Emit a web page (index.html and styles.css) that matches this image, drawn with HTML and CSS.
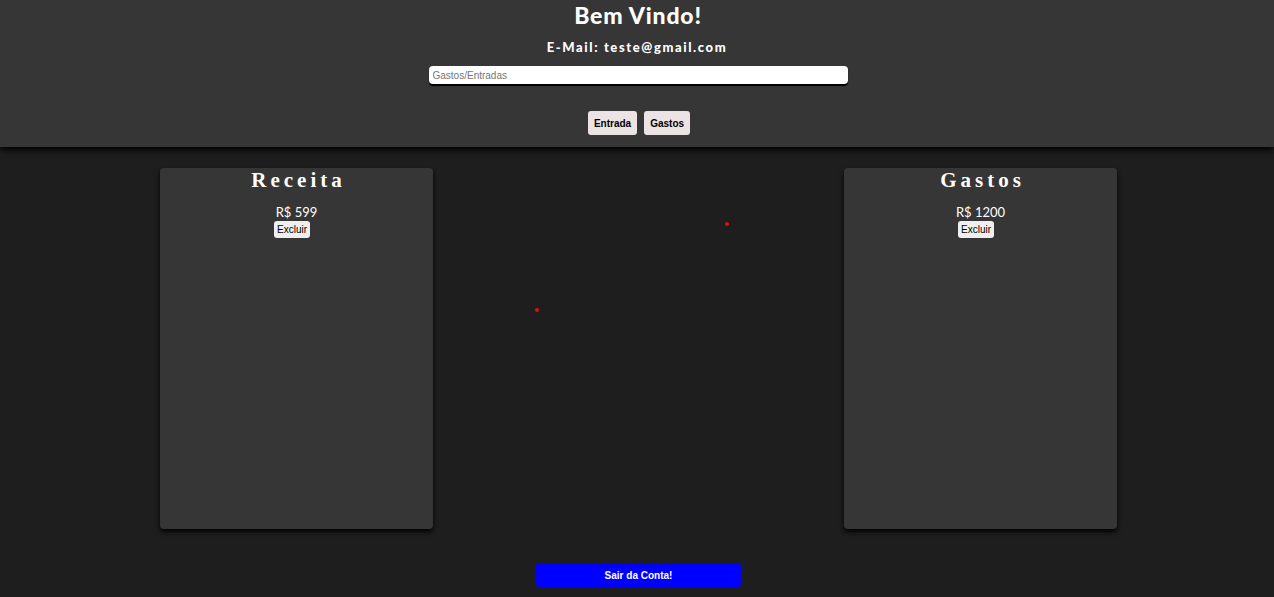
FILE: index.html
```html
<!DOCTYPE html>
<html lang="pt-BR">
<head>
<meta charset="utf-8">
<title>Bem Vindo</title>
<link rel="stylesheet" href="styles.css">
</head>
<body>
<header class="topo">
  <h1 class="titulo">Bem Vindo!</h1>
  <h3 class="email">E-Mail: teste@gmail.com</h3>
  <input class="campo" type="text" placeholder="Gastos/Entradas">
  <div class="acoes">
    <button class="btn">Entrada</button>
    <button class="btn">Gastos</button>
  </div>
</header>
<main class="conteudo">
  <section class="cartao">
    <h2 class="cartao-titulo">Receita</h2>
    <p class="valor">R$ 599</p>
    <button class="excluir">Excluir</button>
  </section>
  <section class="cartao">
    <h2 class="cartao-titulo">Gastos</h2>
    <p class="valor">R$ 1200</p>
    <button class="excluir">Excluir</button>
  </section>
  <span class="ponto ponto-a"></span>
  <span class="ponto ponto-b"></span>
</main>
<footer class="rodape">
  <button class="sair">Sair da Conta!</button>
</footer>
</body>
</html>
```

FILE: styles.css
```css
* { box-sizing: border-box; }
html, body { margin: 0; padding: 0; }
body {
  background: #1e1e1e;
  font-family: "Lato", "Open Sans", sans-serif;
  color: #fff;
  height: 597px;
  overflow: hidden;
}
.topo {
  background: #363636;
  height: 147px;
  display: flex;
  flex-direction: column;
  align-items: center;
  box-shadow: 0 3px 6px rgba(0,0,0,1);
  position: relative;
  z-index: 1;
  padding-top: 1px;
}
.titulo {
  margin: 0;
  font-size: 23px;
  line-height: 28px;
  font-weight: 900;
  letter-spacing: 0.8px;
  padding-left: 2px;
}
.email {
  margin: 10px 0 0;
  font-size: 13px;
  line-height: 16px;
  font-weight: 900;
  letter-spacing: 1.6px;
}
.campo {
  margin-top: 11px;
  margin-left: 2px;
  width: 419px;
  height: 18px;
  border: none;
  border-radius: 4px;
  background: #fff;
  box-shadow: 0 2px 1px #000;
  padding: 0 4px;
  font-family: "Liberation Sans", Arial, sans-serif;
  font-size: 10px;
  outline: none;
}
.campo::placeholder { color: #757575; }
.acoes {
  margin-top: 27px;
  display: flex;
  gap: 7px;
  padding-left: 4px;
}
.btn {
  height: 24px;
  border: none;
  border-radius: 3px;
  background: #ece4e4;
  color: #000;
  font-family: "Liberation Sans", Arial, sans-serif;
  font-weight: bold;
  font-size: 10px;
  padding: 0 6px;
}
.conteudo {
  position: relative;
  display: flex;
  justify-content: space-between;
  padding: 21px 157px 0 160px;
  height: 387px;
}
.cartao {
  width: 273px;
  height: 361px;
  background: #363636;
  border-radius: 4px;
  box-shadow: 0 3px 5px rgba(0,0,0,0.95);
  display: flex;
  flex-direction: column;
  align-items: center;
}
.cartao-titulo {
  margin: 0;
  font-family: "Liberation Serif", "Times New Roman", serif;
  font-size: 21px;
  line-height: 24px;
  font-weight: bold;
  letter-spacing: 4px;
  padding-left: 4px;
}
.valor {
  margin: 12px 0 0;
  font-size: 13px;
  line-height: 16px;
  font-family: "Lato", sans-serif;
}
.excluir {
  margin-top: 1px;
  margin-right: 9px;
  height: 17px;
  padding: 0 3px;
  border: none;
  border-radius: 3px;
  background: #efefef;
  color: #000;
  font-family: "Liberation Sans", Arial, sans-serif;
  font-size: 10px;
}
.ponto {
  position: absolute;
  width: 4px;
  height: 4px;
  border-radius: 50%;
  background: #e01010;
}
.ponto-a { left: 535px; top: 161px; }
.ponto-b { left: 725px; top: 75px; }
.rodape {
  display: flex;
  justify-content: center;
  padding-top: 29px;
}
.sair {
  width: 205px;
  height: 24px;
  border: none;
  border-radius: 3px;
  background: #0000ff;
  color: #fff;
  font-family: "Liberation Sans", Arial, sans-serif;
  font-weight: bold;
  font-size: 10px;
  margin-left: 3px;
}
```
